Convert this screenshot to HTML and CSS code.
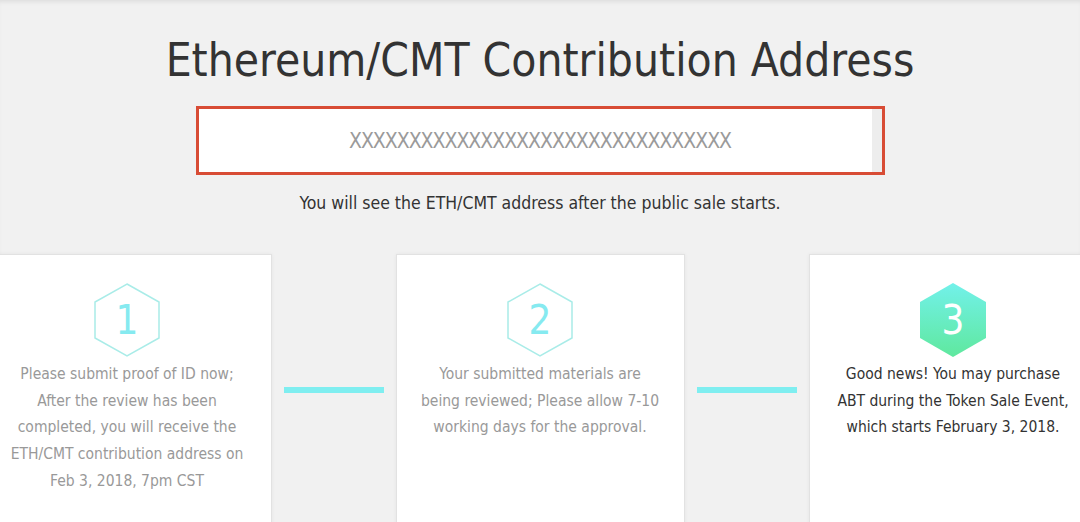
FILE: index.html
```html
<!DOCTYPE html>
<html>
  <head>
    <meta charset="UTF-8" />
    <meta name="viewport" content="width=device-width, initial-scale=1.0" />
    <title>Contribution Address</title>
    <link rel="stylesheet" href="styles.css">
  </head>
  <body>
    <div class="page">
      <h1>Ethereum/CMT Contribution Address</h1>
      <div class="address-box">
        <span class="address">XXXXXXXXXXXXXXXXXXXXXXXXXXXXXXXX</span>
      </div>
      <p class="note">You will see the ETH/CMT address after the public sale starts.</p>

      <div class="steps">
        <div class="card">
          <svg class="hex" viewBox="0 0 66 74" width="66" height="74">
            <polygon points="33,1 65,19 65,55 33,73 1,55 1,19" fill="none" stroke="#a9ece8" stroke-width="1.5" />
            <text x="33" y="51" text-anchor="middle" class="hex-num">1</text>
          </svg>
          <p class="step-text">Please submit proof of ID now;<br>After the review has been<br>completed, you will receive the<br>ETH/CMT contribution address on<br>Feb 3, 2018, 7pm CST</p>
        </div>

        <div class="connector"></div>

        <div class="card">
          <svg class="hex" viewBox="0 0 66 74" width="66" height="74">
            <polygon points="33,1 65,19 65,55 33,73 1,55 1,19" fill="none" stroke="#a9ece8" stroke-width="1.5" />
            <text x="33" y="51" text-anchor="middle" class="hex-num">2</text>
          </svg>
          <p class="step-text">Your submitted materials are<br>being reviewed; Please allow 7-10<br>working days for the approval.</p>
        </div>

        <div class="connector"></div>

        <div class="card active">
          <svg class="hex" viewBox="0 0 66 74" width="66" height="74">
            <defs>
              <linearGradient id="hexFill" x1="0" y1="0" x2="0" y2="1">
                <stop offset="0" stop-color="#72f1ea" />
                <stop offset="1" stop-color="#5fe89e" />
              </linearGradient>
            </defs>
            <polygon points="33,0 66,19 66,55 33,74 0,55 0,19" fill="url(#hexFill)" />
            <text x="33" y="51" text-anchor="middle" class="hex-num white">3</text>
          </svg>
          <p class="step-text">Good news! You may purchase<br>ABT during the Token Sale Event,<br>which starts February 3, 2018.</p>
        </div>
      </div>
    </div>
  </body>
</html>
```

FILE: styles.css
```css
* {
  box-sizing: border-box;
  margin: 0;
  padding: 0;
}

body {
  font-family: "DejaVu Sans Condensed", "Liberation Sans", sans-serif;
  background-color: #f1f1f1;
  overflow: hidden;
}

.page {
  box-shadow: inset 0 4px 4px -2px rgba(0, 0, 0, 0.08);
  padding-top: 30px;
  height: 522px;
}

h1 {
  text-align: center;
  font-weight: normal;
  font-size: 45.7px;
  line-height: 62px;
  color: #333;
}

.address-box {
  width: 689px;
  height: 69px;
  margin: 14px auto 0;
  border: 3px solid #d84c35;
  background-color: #fff;
  display: flex;
  align-items: center;
  justify-content: center;
  box-shadow: inset -10px 0 0 #ededed;
}

.address {
  font-size: 21px;
  color: #9a9a9a;
  letter-spacing: -1px;
}

.note {
  text-align: center;
  font-size: 17.5px;
  color: #333;
  margin-top: 16px;
  line-height: 24px;
}

.steps {
  display: flex;
  justify-content: center;
  align-items: flex-start;
  margin-top: 39px;
}

.card {
  flex: 0 0 289px;
  height: 290px;
  background-color: #fff;
  border: 1px solid #e2e2e2;
  box-shadow: 0 0 4px rgba(0, 0, 0, 0.05);
  display: flex;
  flex-direction: column;
  align-items: center;
  padding-top: 28px;
}

.hex {
  display: block;
}

.hex-num {
  font-family: "DejaVu Sans Condensed", sans-serif;
  font-size: 40px;
  fill: #86eaf0;
}

.hex-num.white {
  fill: #fff;
}

.step-text {
  margin-top: 4px;
  text-align: center;
  white-space: nowrap;
  font-size: 15.5px;
  line-height: 26.7px;
  color: #999;
}

.active .step-text {
  color: #333;
}

.connector {
  flex: 0 0 100px;
  height: 6px;
  margin: 133px 12px 0 12px;
  background-color: #7feef0;
}
```
